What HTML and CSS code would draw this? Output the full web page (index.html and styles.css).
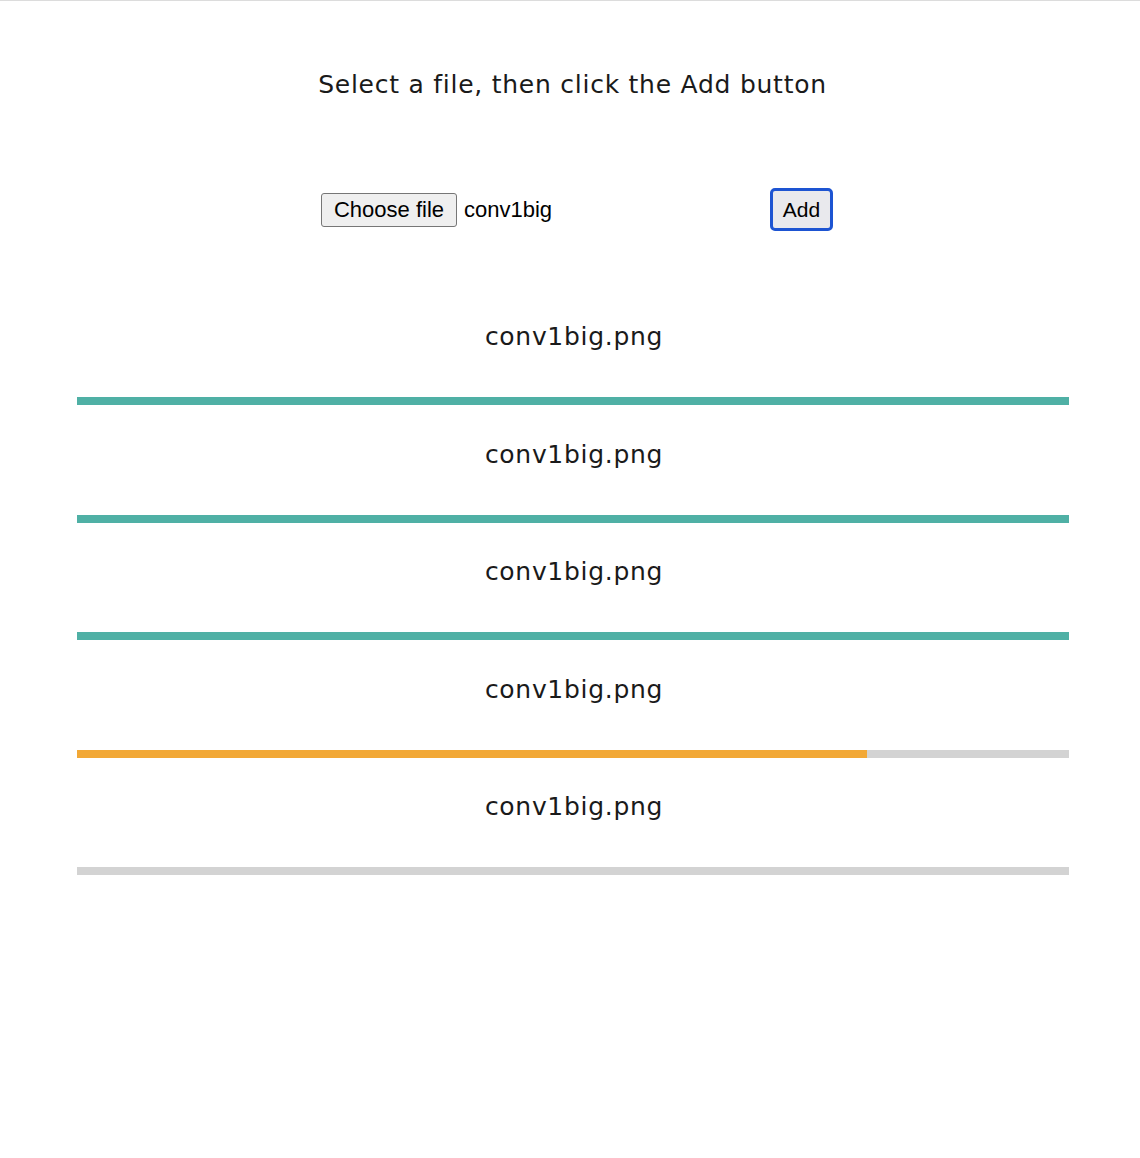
FILE: index.html
```html
<!DOCTYPE html>
<html>
<head>
<meta charset="utf-8">
<link rel="stylesheet" href="styles.css">
</head>
<body>
<div class="page">
  <h1 class="title">Select a file, then click the Add button</h1>
  <div class="controls">
    <div class="file-input">
      <span class="choose">Choose file</span>
      <span class="file-name">conv1big</span>
    </div>
    <button class="add">Add</button>
  </div>
  <div class="list">
    <div class="item">
      <div class="name">conv1big.png</div>
      <div class="bar"><div class="fill done" style="width:100%"></div></div>
    </div>
    <div class="item">
      <div class="name">conv1big.png</div>
      <div class="bar"><div class="fill done" style="width:100%"></div></div>
    </div>
    <div class="item">
      <div class="name">conv1big.png</div>
      <div class="bar"><div class="fill done" style="width:100%"></div></div>
    </div>
    <div class="item">
      <div class="name">conv1big.png</div>
      <div class="bar"><div class="fill active" style="width:79.6%"></div></div>
    </div>
    <div class="item">
      <div class="name">conv1big.png</div>
      <div class="bar"><div class="fill active" style="width:0%"></div></div>
    </div>
  </div>
</div>
</body>
</html>
```
FILE: styles.css
```css
html, body {
  margin: 0;
  padding: 0;
  background: #fff;
}
body {
  border-top: 1px solid #dcdcdc;
  font-family: "DejaVu Sans", Verdana, sans-serif;
  color: #1a1a1a;
}
.page {
  padding-top: 69px;
}
.title {
  margin: 0;
  font-weight: normal;
  font-size: 25px;
  letter-spacing: 0.75px;
  line-height: 30px;
  text-align: center;
  padding-left: 5px;
}
.controls {
  margin-top: 88px;
  display: flex;
  align-items: center;
  width: 512px;
  margin-left: 321px;
  height: 43px;
}
.file-input {
  flex: 1;
  display: flex;
  align-items: center;
  font-family: "Liberation Sans", Arial, sans-serif;
  font-size: 22px;
}
.choose {
  box-sizing: border-box;
  display: inline-flex;
  align-items: center;
  justify-content: center;
  width: 136px;
  height: 34px;
  border: 1px solid #767676;
  border-radius: 3px;
  background: #efefef;
  color: #000;
}
.file-name {
  margin-left: 7px;
  color: #000;
}
.add {
  box-sizing: border-box;
  width: 63px;
  height: 43px;
  padding: 0;
  border: 3px solid #1d54d2;
  border-radius: 5px;
  background: #e9e9ed;
  font-family: "Liberation Sans", Arial, sans-serif;
  font-size: 21px;
  color: #000;
}
.list {
  margin-top: 91px;
  margin-left: 77px;
  width: 992px;
  display: flex;
  flex-direction: column;
  gap: 34.5px;
}
.name {
  font-size: 25px;
  letter-spacing: 0.7px;
  line-height: 30px;
  text-align: center;
  margin-bottom: 45px;
  padding-left: 2px;
}
.bar {
  height: 8px;
  background: #d3d3d3;
}
.fill {
  height: 100%;
}
.fill.done {
  background: #4fb0a5;
}
.fill.active {
  background: #f2a836;
}
```
